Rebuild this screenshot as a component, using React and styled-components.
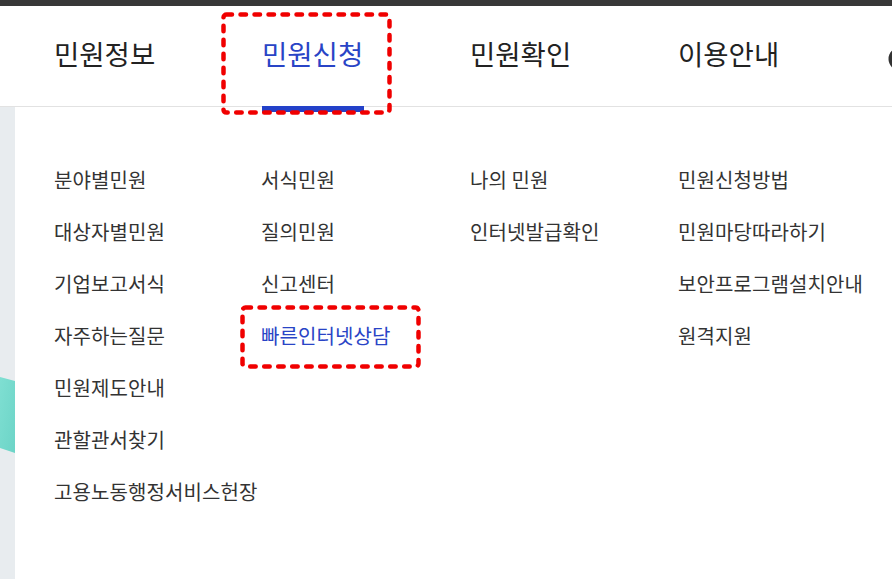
import React from 'react'
import styled, { createGlobalStyle } from 'styled-components'

const GlobalStyle = createGlobalStyle`
  html, body {
    margin: 0;
    padding: 0;
    background: #fff;
    overflow: hidden;
  }
  body {
    font-family: 'Noto Sans CJK KR', 'Noto Sans', sans-serif;
  }
`

const navItems = ['민원정보', '민원신청', '민원확인', '이용안내']

const menuColumns = [
  ['분야별민원', '대상자별민원', '기업보고서식', '자주하는질문', '민원제도안내', '관할관서찾기', '고용노동행정서비스헌장'],
  ['서식민원', '질의민원', '신고센터', '빠른인터넷상담'],
  ['나의 민원', '인터넷발급확인'],
  ['민원신청방법', '민원마당따라하기', '보안프로그램설치안내', '원격지원'],
]

const Page = styled.div`
  position: relative;
  width: 892px;
  height: 579px;
  overflow: hidden;
  display: flex;
  flex-direction: column;
`

const TopBar = styled.div`
  height: 6px;
  background: #383838;
  flex-shrink: 0;
`

const Header = styled.header`
  height: 100px;
  flex-shrink: 0;
  border-bottom: 1px solid #e2e2e2;
  display: flex;
  padding-left: 54px;
  position: relative;
  background: #fff;
  z-index: 1;
`

const NavItem = styled.div`
  position: relative;
  width: 208px;
  display: flex;
  align-items: center;
  padding-bottom: 6px;
  font-size: 27.5px;
  color: ${p => (p.$active ? '#2944c6' : '#222')};
`

const ActiveBar = styled.span`
  position: absolute;
  left: 0;
  bottom: -6px;
  width: 102px;
  height: 6px;
  background: #2341c9;
`

const EdgeIcon = styled.svg`
  position: absolute;
  right: -16px;
  top: 40px;
`

const Body = styled.div`
  flex: 1;
  display: flex;
`

const SideStrip = styled.div`
  width: 15px;
  flex-shrink: 0;
  background: #e8ecef;
  position: relative;
`

const Panel = styled.div`
  flex: 1;
  background: #fff;
  display: grid;
  grid-template-columns: 207px 209px 208px 1fr;
  align-content: start;
  padding: 47px 0 0 39px;
`

const MenuColumn = styled.ul`
  list-style: none;
  margin: 0;
  padding: 0;
`

const MenuItem = styled.li`
  height: 52px;
  line-height: 52px;
  font-size: 20px;
  letter-spacing: 0.1px;
  white-space: nowrap;
  color: ${p => (p.$active ? '#2944c6' : '#333')};
`

const Callout = styled.svg`
  position: absolute;
  pointer-events: none;
  z-index: 2;
`

const DashedBox = ({ x, y, w, h }) => (
  <Callout style={{ left: x, top: y }} width={w} height={h}>
    <rect
      x="2.5"
      y="2.5"
      width={w - 5}
      height={h - 5}
      rx="3"
      fill="none"
      stroke="#f00000"
      strokeWidth="4.5"
      strokeDasharray="5.5 8.5"
      strokeLinecap="round"
    />
  </Callout>
)

export default function App() {
  return (
    <Page>
      <GlobalStyle />
      <TopBar />
      <Header>
        {navItems.map((label, i) => (
          <NavItem key={label} $active={i === 1}>
            {label}
            {i === 1 && <ActiveBar />}
          </NavItem>
        ))}
        <EdgeIcon width="20" height="28" viewBox="0 0 20 28">
          <circle cx="12" cy="13" r="11.5" fill="#333" />
        </EdgeIcon>
      </Header>
      <Body>
        <SideStrip>
          <svg width="15" height="472" style={{ display: 'block' }}>
            <defs>
              <linearGradient id="teal" x1="0" y1="0" x2="1" y2="1">
                <stop offset="0" stopColor="#7fdfd2" />
                <stop offset="1" stopColor="#6cd4c7" />
              </linearGradient>
            </defs>
            <polygon points="0,270 15,274 15,346 0,341" fill="url(#teal)" />
          </svg>
        </SideStrip>
        <Panel>
          {menuColumns.map((col, ci) => (
            <MenuColumn key={ci}>
              {col.map(item => (
                <MenuItem key={item} $active={item === '빠른인터넷상담'}>
                  {item}
                </MenuItem>
              ))}
            </MenuColumn>
          ))}
        </Panel>
      </Body>
      <DashedBox x={221} y={12} w={171} h={103} />
      <DashedBox x={240} y={305} w={181} h={64} />
    </Page>
  )
}
